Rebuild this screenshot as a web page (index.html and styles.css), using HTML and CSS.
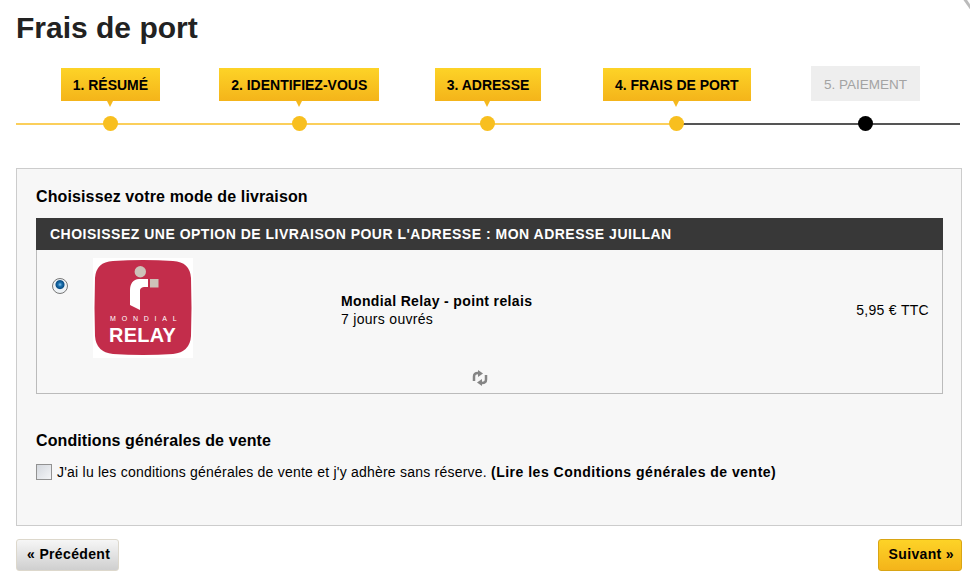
FILE: index.html
```html
<!DOCTYPE html>
<html lang="fr">
<head>
    <meta charset="UTF-8">
    <title>Frais de port</title>
    <link rel="stylesheet" href="styles.css">
</head>
<body>
    <div class="corner"></div>
    <h1>Frais de port</h1>

    <ul class="steps">
        <li class="step done"><span class="step-label">1. RÉSUMÉ</span><span class="step-dot"></span></li>
        <li class="step done"><span class="step-label">2. IDENTIFIEZ-VOUS</span><span class="step-dot"></span></li>
        <li class="step done"><span class="step-label">3. ADRESSE</span><span class="step-dot"></span></li>
        <li class="step current"><span class="step-label">4. FRAIS DE PORT</span><span class="step-dot"></span></li>
        <li class="step todo"><span class="step-label">5. PAIEMENT</span><span class="step-dot"></span></li>
    </ul>

    <div class="box">
        <h2>Choisissez votre mode de livraison</h2>
        <div class="delivery">
            <div class="delivery-title">CHOISISSEZ UNE OPTION DE LIVRAISON POUR L'ADRESSE : MON ADRESSE JUILLAN</div>
            <div class="delivery-row">
                <span class="radio"></span>
                <svg class="logo" width="100" height="100" viewBox="0 0 100 100">
                    <rect width="100" height="100" fill="#fff"/>
                    <path d="M20 3 Q50 1 80 3 Q97 4 98 20 Q99 50 98 78 Q97 94 80 96 Q50 98 20 96 Q3 94 2 78 Q1 50 2 20 Q3 4 20 3Z" fill="#c32d4b"/>
                    <circle cx="47.300" cy="13.700" r="5.700" fill="#cdc2b8"/>
                    <rect x="57" y="21" width="8.500" height="8.500" fill="#cdc2b8"/>
                    <path d="M55 21 H46 C40 21 37 26 37 32 L37 47 L47 52 L47 33 C47 30 49 29 52 29 H55Z" fill="#fff"/>
                    <text class="logo-small" x="17" y="63" textLength="67">MONDIAL</text>
                    <text class="logo-big" x="16" y="84" textLength="67" lengthAdjust="spacingAndGlyphs">RELAY</text>
                </svg>
                <div class="carrier">
                    <strong>Mondial Relay - point relais</strong>
                    <span>7 jours ouvrés</span>
                </div>
                <div class="price">5,95 € TTC</div>
            </div>
            <div class="delivery-foot">
                <svg width="16" height="16" viewBox="0 0 16 16" fill="none" stroke="#858585" stroke-width="2.500">
                    <path d="M2 11 V6.500 Q2 3 6 3 H7"/>
                    <path d="M6 0 L11 3.500 L6 7Z" fill="#858585" stroke="none"/>
                    <path d="M14 5 V9.500 Q14 13 10 13 H9"/>
                    <path d="M10 9 L5 12.500 L10 16Z" fill="#858585" stroke="none"/>
                </svg>
            </div>
        </div>

        <h2 class="terms-title">Conditions générales de vente</h2>
        <p class="terms"><span class="checkbox"></span><span>J'ai lu les conditions générales de vente et j'y adhère sans réserve. <b>(Lire les Conditions générales de vente)</b></span></p>
    </div>

    <div class="nav">
        <a class="btn btn-prev">« Précédent</a>
        <a class="btn btn-next">Suivant »</a>
    </div>
</body>
</html>
```

FILE: styles.css
```css
html, body {
    height: 584px;
    overflow: hidden;
}
body {
    margin: 0;
    padding: 0 8px 0 16px;
    background: #fff;
    color: #000;
    font-family: "Liberation Sans", Arial, sans-serif;
    font-size: 14px;
    position: relative;
}
.corner {
    position: absolute;
    top: 1px;
    right: -4px;
    width: 14px;
    height: 3px;
    background: #bbb;
    transform: rotate(55deg);
}
h1 {
    margin: 0;
    padding-top: 11px;
    font-size: 30px;
    line-height: 34px;
    color: #222;
}

/* etapes */
.steps {
    display: flex;
    list-style: none;
    margin: 23px 2px 0 0;
    padding: 0;
}
.step {
    flex: 1;
    position: relative;
    height: 64px;
    display: flex;
    flex-direction: column;
    align-items: center;
}
.step::after {
    content: "";
    position: absolute;
    left: 0;
    right: 0;
    top: 55px;
    height: 2px;
    background: #fbcf5b;
}
.step.current::after {
    left: 50%;
    background: #555;
}
.step.current::before {
    content: "";
    position: absolute;
    left: 0;
    right: 50%;
    top: 55px;
    height: 2px;
    background: #fbcf5b;
}
.step.todo::after {
    background: #555;
}
.step-label {
    position: relative;
    height: 33px;
    padding: 0 12px;
    line-height: 34px;
    font-weight: bold;
    font-size: 14px;
    white-space: nowrap;
    background: linear-gradient(#fdd327, #f4b41a);
}
.step-label::after {
    content: "";
    position: absolute;
    left: 50%;
    bottom: -6px;
    margin-left: -3.5px;
    border-left: 3.5px solid transparent;
    border-right: 3.5px solid transparent;
    border-top: 6px solid #f6b91c;
}
.todo .step-label {
    height: 35px;
    margin-top: -2px;
    padding: 0 13px;
    line-height: 38px;
    font-size: 13.5px;
    font-weight: normal;
    color: #a3a3a3;
    background: #eee;
}
.todo .step-label::after {
    display: none;
}
.step-dot {
    position: absolute;
    top: 48px;
    width: 15px;
    height: 15px;
    border-radius: 50%;
    background: #f8bf1f;
    z-index: 1;
}
.todo .step-dot {
    background: #000;
}

/* bloc livraison */
.box {
    margin-top: 36px;
    height: 358px;
    box-sizing: border-box;
    padding: 19px 18px 0 19px;
    background: #f7f7f7;
    border: 1px solid #ccc;
}
h2 {
    margin: 0;
    font-size: 16px;
    line-height: 18px;
    letter-spacing: .12px;
}
.delivery {
    margin-top: 12px;
    height: 176px;
    box-sizing: border-box;
    border: 1px solid #bbb;
    border-top: 0;
    display: flex;
    flex-direction: column;
}
.delivery-title {
    height: 32px;
    margin: 0 -1px;
    padding-left: 14px;
    line-height: 32px;
    font-weight: bold;
    letter-spacing: .5px;
    color: #fff;
    background: #383838;
}
.delivery-row {
    display: flex;
    position: relative;
    padding-left: 56px;
    height: 108px;
    letter-spacing: .3px;
}
.radio {
    position: absolute;
    left: 15px;
    top: 28px;
    width: 16px;
    height: 16px;
    box-sizing: border-box;
    border: 1px solid #777;
    border-radius: 50%;
    background: radial-gradient(circle at 50% 40%, #8cc8ee 0, #1a6fae 2px, #0b4f86 4px, #eef2f5 5px);
}
.logo {
    flex: none;
    margin-top: 8px;
}
.logo-small {
    font-size: 7px;
    fill: #fff;
}
.logo-big {
    font-size: 21px;
    font-weight: bold;
    fill: #fff;
}
.carrier {
    margin-left: 148px;
    padding-top: 42px;
    line-height: 18px;
    display: flex;
    flex-direction: column;
}
.carrier strong {
    letter-spacing: .36px;
}
.price {
    margin-left: auto;
    margin-right: 13px;
    padding-top: 51px;
    line-height: 18px;
}
.delivery-foot {
    display: flex;
    justify-content: center;
    padding: 12px 20px 0 0;
}

.terms-title {
    margin-top: 38px;
    letter-spacing: .1px;
}
.terms {
    margin: 13px 0 0;
    display: flex;
    align-items: center;
    line-height: 18px;
    letter-spacing: .22px;
}
.terms b {
    letter-spacing: .5px;
}
.checkbox {
    flex: none;
    width: 14px;
    height: 14px;
    margin-right: 5px;
    border: 1px solid #929292;
    background: linear-gradient(135deg, #d4d8de, #f4f5f7);
}

/* boutons */
.nav {
    display: flex;
    justify-content: space-between;
    margin-top: 13px;
}
.btn {
    height: 30px;
    line-height: 29px;
    border-radius: 3px;
    font-weight: bold;
    font-size: 14px;
    letter-spacing: .35px;
}
.btn-prev {
    padding: 0 8px 0 10px;
    border: 1px solid #ddd8cc;
    background: linear-gradient(#f6f6f6, #cfcfcf);
}
.btn-next {
    padding: 0 7px 0 10px;
    border: 1px solid #d9a514;
    background: linear-gradient(#fdd327, #f4b41a);
}
```
